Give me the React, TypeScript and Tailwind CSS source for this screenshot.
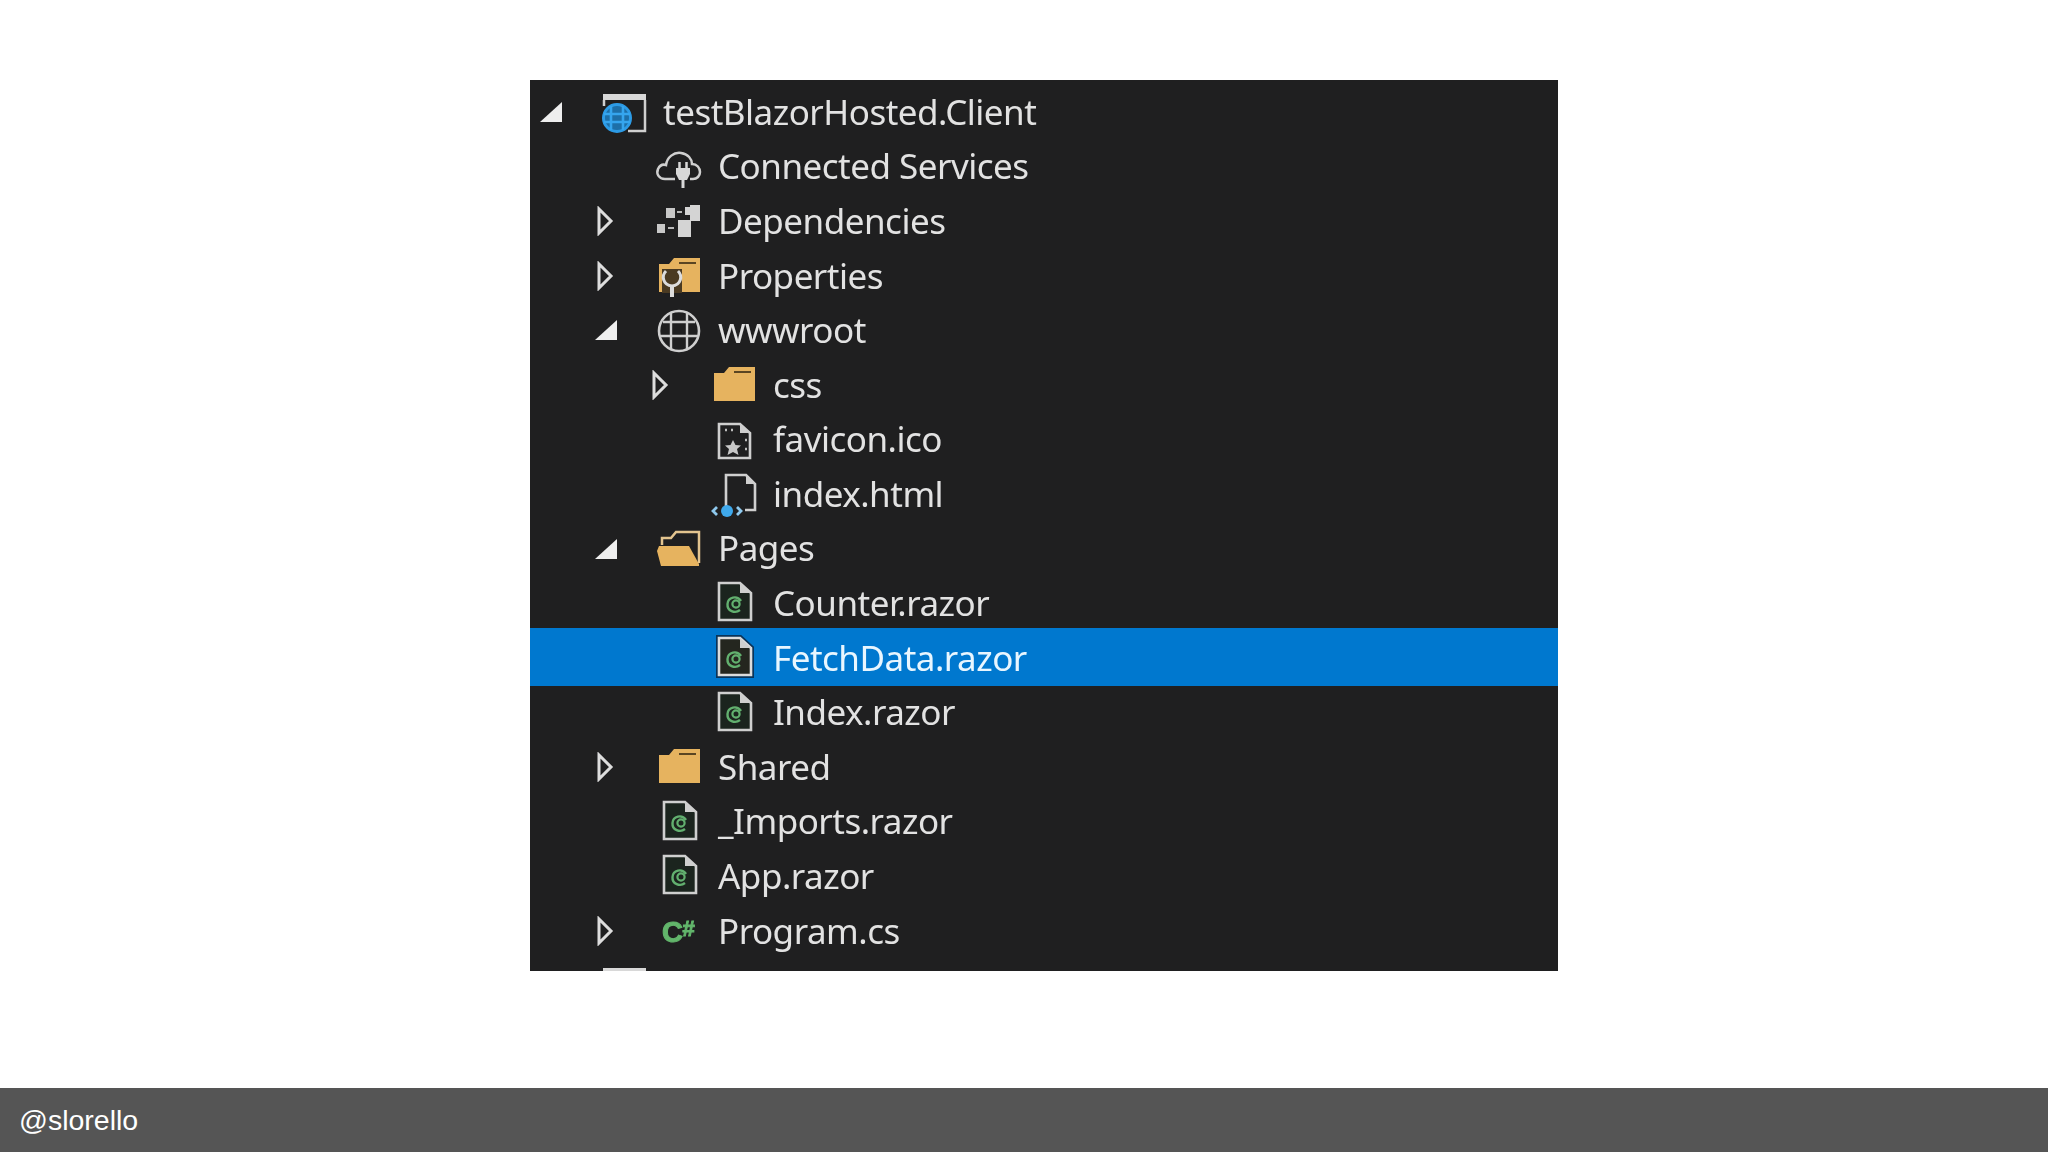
import React from 'react';

type IconName = 'project' | 'cloud' | 'deps' | 'props' | 'globe' | 'folder' | 'favicon' | 'html' | 'pages' | 'razor' | 'csharp';
type Arrow = 'open' | 'closed' | null;

interface Row {
  label: string;
  depth: 0 | 1 | 2;
  icon: IconName;
  arrow: Arrow;
  selected?: boolean;
}

const rows: Row[] = [
  { label: 'testBlazorHosted.Client', depth: 0, icon: 'project', arrow: 'open' },
  { label: 'Connected Services', depth: 1, icon: 'cloud', arrow: null },
  { label: 'Dependencies', depth: 1, icon: 'deps', arrow: 'closed' },
  { label: 'Properties', depth: 1, icon: 'props', arrow: 'closed' },
  { label: 'wwwroot', depth: 1, icon: 'globe', arrow: 'open' },
  { label: 'css', depth: 2, icon: 'folder', arrow: 'closed' },
  { label: 'favicon.ico', depth: 2, icon: 'favicon', arrow: null },
  { label: 'index.html', depth: 2, icon: 'html', arrow: null },
  { label: 'Pages', depth: 1, icon: 'pages', arrow: 'open' },
  { label: 'Counter.razor', depth: 2, icon: 'razor', arrow: null },
  { label: 'FetchData.razor', depth: 2, icon: 'razor', arrow: null, selected: true },
  { label: 'Index.razor', depth: 2, icon: 'razor', arrow: null },
  { label: 'Shared', depth: 1, icon: 'folder', arrow: 'closed' },
  { label: '_Imports.razor', depth: 1, icon: 'razor', arrow: null },
  { label: 'App.razor', depth: 1, icon: 'razor', arrow: null },
  { label: 'Program.cs', depth: 1, icon: 'csharp', arrow: 'closed' },
  { label: '', depth: 0, icon: 'project', arrow: null },
];

const depthPad = ['pl-[6px]', 'pl-[61px]', 'pl-[116px]'];

const TreeIcon: React.FC<{ name: IconName; selected?: boolean }> = ({ name, selected }) => {
  const line = '#cfcfcf';
  switch (name) {
    case 'project':
      return (
        <>
          <rect x="3" y="6" width="43" height="6" fill="#d8d8d8" />
          <path d="M45 12 L45 43 L28 43" fill="none" stroke={line} strokeWidth="2.5" />
          <path d="M4 12 L4 18" stroke={line} strokeWidth="2.5" />
          <circle cx="17" cy="30" r="13.5" fill="#1d6fa8" stroke="#2c9be6" strokeWidth="3" />
          <path d="M4 26 H30 M4 34 H30 M11 18 V42 M23 18 V42" stroke="#35a5ee" strokeWidth="2.6" />
        </>
      );
    case 'cloud':
      return (
        <>
          <path
            d="M20 36 H10 C4 36 1 31 3 26 C5 22 8 21 11 22 C12 14 19 9 26 10 C33 11 37 16 37 21 C42 21 45 25 45 29 C45 33 42 36 38 36 H35"
            fill="none"
            stroke={line}
            strokeWidth="2.5"
          />
          <path d="M21 25 H35 V31 L32 37 H24 L21 31 Z" fill="#d8d8d8" />
          <path d="M24.5 19 V25 M31.5 19 V25" stroke="#d8d8d8" strokeWidth="2.5" />
          <path d="M28 37 V45" stroke="#d8d8d8" strokeWidth="3" />
        </>
      );
    case 'deps':
      return (
        <>
          <rect x="11" y="11" width="9" height="10" fill="#c8c8c8" />
          <rect x="35" y="8" width="10" height="16" fill="#d4d4d4" />
          <rect x="30" y="10" width="5" height="8" fill="#d4d4d4" />
          <rect x="2" y="27" width="8" height="9" fill="#c8c8c8" />
          <rect x="23" y="23" width="13" height="17" fill="#d4d4d4" />
          <path d="M22 15 H27 M13 31 H19" stroke="#b8b8b8" strokeWidth="2" />
        </>
      );
    case 'props':
      return (
        <>
          <path d="M4 12 L14 12 L19 6 L45 6 L45 40 L4 40 Z" fill="#e6b35f" />
          <path d="M24 11 L41 11" stroke="#5a4522" strokeWidth="2" />
          <path d="M7 17 H27 V41 H7 Z" fill="#4a3a22" />
          <path d="M11 19 C6 24 8 33 17 34 C26 33 28 24 23 19" fill="none" stroke="#dcdcdc" strokeWidth="3" />
          <path d="M17 34 V45" stroke="#dcdcdc" strokeWidth="4" />
        </>
      );
    case 'globe':
      return (
        <>
          <circle cx="24" cy="25" r="20" fill="none" stroke={line} strokeWidth="2.6" />
          <path d="M8 16 H40 M5 30 H43 M16 7 V43 M32 7 V43" stroke={line} strokeWidth="2.4" />
        </>
      );
    case 'folder':
      return (
        <>
          <path d="M4 12 L14 12 L19 6 L45 6 L45 40 L4 40 Z" fill="#e6b35f" />
          <path d="M24 11 L41 11" stroke="#5a4522" strokeWidth="2" />
        </>
      );
    case 'favicon':
      return (
        <>
          <path d="M9 8 H30 L40 17 V42 H9 Z" fill="none" stroke={line} strokeWidth="2.6" />
          <path d="M30 8 L30 17 L40 17 Z" fill={line} />
          <path d="M23 24 L25.5 29 L31 29.5 L27 33 L28.5 39 L23 36 L17.5 39 L19 33 L15 29.5 L20.5 29 Z" fill="#c8c8c8" />
          <path d="M15 14 H17 M21 14 H23 M35 24 H37 M35 33 H37" stroke="#bdbdbd" strokeWidth="2.4" />
        </>
      );
    case 'html':
      return (
        <>
          <path d="M16 36 V5 H36 L45 14 V40 H35" fill="none" stroke={line} strokeWidth="2.6" />
          <path d="M36 5 V14 H45 Z" fill={line} />
          <circle cx="17" cy="41" r="6" fill="#3fa9ec" />
          <path d="M7 37 L3 41 L7 45 M27 37 L31 41 L27 45" fill="none" stroke="#8fc9ee" strokeWidth="2.8" />
        </>
      );
    case 'pages':
      return (
        <>
          <path d="M7 20 V13 H16 L21 7 H44 V38" fill="none" stroke="#e3c48f" strokeWidth="2.5" />
          <path d="M2 26 L4 21 H34 L44 39 L44 41 H6 Z" fill="#e6b35f" />
        </>
      );
    case 'razor':
      return (
        <>
          {selected && <path d="M9 4 H30 L41 14 V41 H9 Z" fill="none" stroke="#0a3358" strokeWidth="6" />}
          <path d="M9 4 H30 L41 14 V41 H9 Z" fill={selected ? '#24261f' : '#1b241e'} stroke={selected ? '#dcdcdc' : line} strokeWidth="2.6" />
          <path d="M30 4 V14 H41 Z" fill={line} />
          <path d="M31 22 C27 16 18 18 17.5 25 C17 32 25 35 30 31" fill="none" stroke="#62b06f" strokeWidth="2.4" />
          <circle cx="26" cy="25" r="3.6" fill="none" stroke="#62b06f" strokeWidth="2.2" />
        </>
      );
    case 'csharp':
      return (
        <text x="7" y="35" fontFamily="'Liberation Sans', sans-serif" fontWeight="700" fontSize="29" fill="#62b56b" stroke="#62b56b" strokeWidth="1">
          C<tspan fontSize="22" dy="-6">#</tspan>
        </text>
      );
  }
};

const Expander: React.FC<{ kind: Arrow }> = ({ kind }) => {
  if (!kind) return <span className="w-[64px] shrink-0" />;
  return (
    <svg className="w-[64px] h-[30px] shrink-0" viewBox="0 0 64 30">
      {kind === 'open' ? (
        <path d="M4 25 L26 25 L26 5 Z" fill="#eeeeee" />
      ) : (
        <path d="M8 3 L20 15 L8 27 Z" fill="none" stroke="#dddddd" strokeWidth="3" />
      )}
    </svg>
  );
};

const TreeRow: React.FC<{ row: Row }> = ({ row }) => (
  <div
    className={`flex items-center ${depthPad[row.depth]} ${
      row.selected ? 'h-[58px] -mt-[3px] -mb-[0.4px] pt-[2.6px] bg-[#0078cf] text-[#e8f6ff]' : 'h-[54.6px] text-[#e2e2e2]'
    }`}
  >
    <Expander kind={row.arrow} />
    <svg className="w-[48px] h-[48px] shrink-0 overflow-visible" viewBox="0 0 48 48">
      <TreeIcon name={row.icon} selected={row.selected} />
    </svg>
    <span className="ml-[15px] whitespace-nowrap">{row.label}</span>
  </div>
);

export default function App() {
  return (
    <div className="h-screen flex flex-col bg-white">
      <main className="flex-1 pl-[530px] pt-[80px]">
        <div className="w-[1028px] h-[891px] overflow-hidden pt-[4.7px] bg-[#1f1f20] font-['Noto_Sans','Open_Sans',sans-serif] text-[35px] tracking-[-0.5px] blur-[0.6px]">
          {rows.map((row, i) => (
            <TreeRow key={i} row={row} />
          ))}
        </div>
      </main>
      <footer className="h-[64px] flex items-center pl-[19px] pt-[1px] bg-[#555555] text-white text-[28.5px] font-['Liberation_Sans',Arial,sans-serif]">
        @slorello
      </footer>
    </div>
  );
}
